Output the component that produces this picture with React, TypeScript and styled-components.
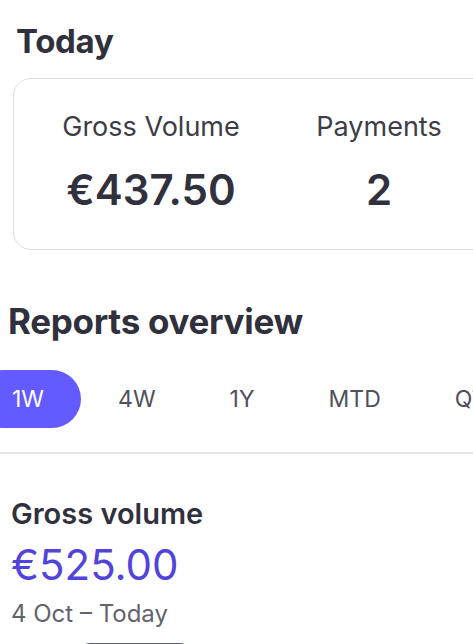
import React from 'react'
import styled, { createGlobalStyle } from 'styled-components'

const GlobalStyle = createGlobalStyle`
  html, body {
    margin: 0;
    padding: 0;
    background: #ffffff;
    overflow: hidden;
  }
  body {
    font-family: Inter, 'Noto Sans', 'Liberation Sans', sans-serif;
    color: #30313d;
    -webkit-font-smoothing: antialiased;
  }
`

const Page = styled.div`
  width: 473px;
  height: 644px;
  overflow: hidden;
`

const TodaySection = styled.section`
  padding: 20px 0 0 16px;
`

const SectionTitle = styled.h1`
  margin: 0;
  font-size: 33px;
  font-weight: 700;
  letter-spacing: -0.3px;
  line-height: 42px;
  color: #30313d;
`

const StatCard = styled.div`
  margin: 16px 0 0 -3px;
  width: 520px;
  height: 172px;
  box-sizing: border-box;
  border: 1.5px solid #dadde2;
  border-radius: 18px;
  display: grid;
  grid-template-columns: 228px 228px;
  padding: 33px 0 0 23px;
`

const Stat = styled.div`
  display: flex;
  flex-direction: column;
  align-items: center;
  gap: 25px;
`

const StatLabel = styled.div`
  font-size: 27px;
  font-weight: 400;
  line-height: 30px;
  color: #3c3d47;
`

const StatValue = styled.div`
  font-size: 42px;
  font-weight: 600;
  line-height: 46px;
  color: #30313d;
`

const ReportsSection = styled.section`
  margin-top: 50px;
`

const ReportsTitle = styled(SectionTitle)`
  padding-left: 8px;
  font-size: 35px;
`

const TabStrip = styled.div`
  margin-top: 28px;
  overflow: hidden;
  border-bottom: 2px solid #e3e4e8;
  padding-bottom: 24px;
`

const TabTrack = styled.div`
  display: flex;
  margin-left: -25px;
  width: max-content;
`

const Tab = styled.div<{ $active?: boolean }>`
  height: 58px;
  padding: 0 37px;
  display: flex;
  align-items: center;
  border-radius: 29px;
  font-size: 23px;
  font-weight: 400;
  color: ${(p) => (p.$active ? '#ffffff' : '#4f505b')};
  background: ${(p) => (p.$active ? '#635bff' : 'transparent')};
`

const Metric = styled.div`
  padding: 43px 0 0 11px;
`

const MetricTitle = styled.div`
  font-size: 29px;
  font-weight: 600;
  line-height: 34px;
  color: #30313d;
`

const MetricValue = styled.div`
  margin-top: 9px;
  font-size: 42px;
  font-weight: 400;
  line-height: 50px;
  color: #5244db;
`

const MetricRange = styled.div`
  margin-top: 9px;
  font-size: 24px;
  line-height: 30px;
  color: #62636d;
`

const BottomButton = styled.div`
  margin: 14px 0 0 69px;
  width: 110px;
  height: 40px;
  border-radius: 10px;
  background: #5c5f6c;
`

const tabs = ['1W', '4W', '1Y', 'MTD', 'QTD', 'YTD']

export default function App() {
  return (
    <Page>
      <GlobalStyle />
      <TodaySection>
        <SectionTitle>Today</SectionTitle>
        <StatCard>
          <Stat>
            <StatLabel>Gross Volume</StatLabel>
            <StatValue>€437.50</StatValue>
          </Stat>
          <Stat>
            <StatLabel>Payments</StatLabel>
            <StatValue>2</StatValue>
          </Stat>
        </StatCard>
      </TodaySection>
      <ReportsSection>
        <ReportsTitle>Reports overview</ReportsTitle>
        <TabStrip>
          <TabTrack>
            {tabs.map((t, i) => (
              <Tab key={t} $active={i === 0}>
                {t}
              </Tab>
            ))}
          </TabTrack>
        </TabStrip>
        <Metric>
          <MetricTitle>Gross volume</MetricTitle>
          <MetricValue>€525.00</MetricValue>
          <MetricRange>4 Oct – Today</MetricRange>
          <BottomButton />
        </Metric>
      </ReportsSection>
    </Page>
  )
}
